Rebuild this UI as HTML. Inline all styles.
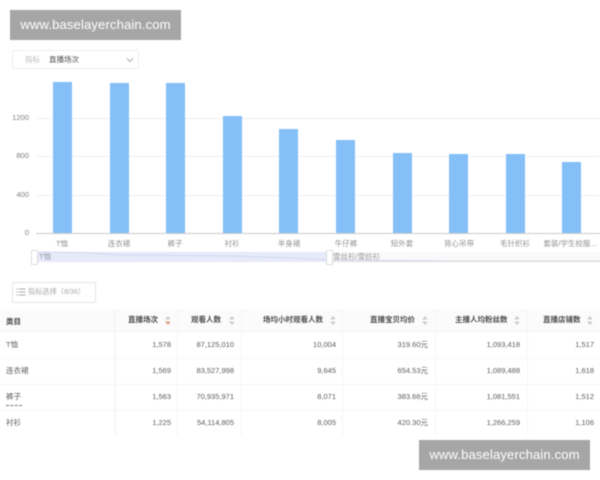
<!DOCTYPE html>
<html><head><meta charset="utf-8">
<style>
html,body{margin:0;padding:0;width:600px;height:480px;overflow:hidden;background:#fff}
#p{position:relative;width:600px;height:480px;overflow:hidden;font-family:"Liberation Sans","Noto Sans CJK SC",sans-serif;filter:blur(.45px)}
#p div,#p span.a{position:absolute}
.t{white-space:nowrap;line-height:14px}
.wm{background:#a6a6a6;color:#fff;font-size:13.1px;line-height:30px;text-align:center;letter-spacing:.12px}
.bar{background:#85bff8;width:19px;bottom:247px}
.g{background:#efefef;height:1px;left:36px;width:564px}
.yl{color:#808080;font-size:7.6px;text-align:right;width:18px;left:11px}
.xl{color:#909090;font-size:7.5px;text-align:center;width:70px;top:237px}
.h{color:#4d4d4d;font-size:7.5px;font-weight:bold;top:313px}
.c{color:#5c5c5c;font-size:7.5px;text-align:right;width:70px}
.n{color:#5c5c5c;font-size:7.5px;left:6px}
.sv{width:5px;height:9px}
.ln{background:#f6f6f6}
</style></head><body><div id="p">

<div class="wm" style="left:10px;top:10px;width:171px;height:30px">www.baselayerchain.com</div>
<div class="wm" style="left:419px;top:440px;width:171px;height:30px">www.baselayerchain.com</div>

<div style="left:12px;top:50px;width:125px;height:17px;border:1px solid #efefef;border-radius:2px"></div>
<div class="t" style="left:25px;top:53px;font-size:7.5px;color:#bbb">指标</div>
<div class="t" style="left:49px;top:53px;font-size:7.5px;color:#4d4d4d">直播场次</div>
<svg style="position:absolute;left:126px;top:57px" width="8" height="6"><path d="M1 1.500 L4 4.500 L7 1.500" fill="none" stroke="#aaa" stroke-width="1"/></svg>

<div class="g" style="top:118px"></div>
<div class="g" style="top:156px"></div>
<div class="g" style="top:195px"></div>
<div class="g" style="top:233px;background:#ccc"></div>
<div class="t yl" style="top:111px">1200</div>
<div class="t yl" style="top:149px">800</div>
<div class="t yl" style="top:188px">400</div>
<div class="t yl" style="top:226px">0</div>

<div class="bar" style="left:53px;top:82px;height:151px"></div>
<div class="bar" style="left:110px;top:83px;height:150px"></div>
<div class="bar" style="left:166px;top:83px;height:150px"></div>
<div class="bar" style="left:223px;top:116px;height:117px"></div>
<div class="bar" style="left:279px;top:129px;height:104px"></div>
<div class="bar" style="left:336px;top:140px;height:93px"></div>
<div class="bar" style="left:393px;top:153px;height:80px"></div>
<div class="bar" style="left:449px;top:154px;height:79px"></div>
<div class="bar" style="left:506px;top:154px;height:79px"></div>
<div class="bar" style="left:562px;top:162px;height:71px"></div>

<div class="t xl" style="left:27px">T恤</div>
<div class="t xl" style="left:84px">连衣裙</div>
<div class="t xl" style="left:140px">裤子</div>
<div class="t xl" style="left:197px">衬衫</div>
<div class="t xl" style="left:254px">半身裙</div>
<div class="t xl" style="left:311px">牛仔裤</div>
<div class="t xl" style="left:367px">短外套</div>
<div class="t xl" style="left:424px">背心吊带</div>
<div class="t xl" style="left:480px">毛针织衫</div>
<div class="t xl" style="left:535px;width:70px">套装/学生校服...</div>

<svg style="position:absolute;left:31px;top:251px" width="569" height="12">
<rect x="0" y="1" width="569" height="10" fill="#f9f9f9"/>
<rect x="4" y="1" width="295" height="10" fill="#e6eaf9"/>
<path d="M4 1 L50 1.500 L90 4 L200 5 L260 7 L299 9 L420 10 L569 10" fill="none" stroke="#d2d8f0" stroke-width="1"/>
<path d="M299 10.500 L569 10.500" stroke="#ddd" stroke-width="1"/>
</svg>
<div style="left:31px;top:250px;width:5px;height:13px;background:#fff;border:1px solid #ddd;border-radius:1px"></div>
<div style="left:326px;top:250px;width:5px;height:13px;background:#fff;border:1px solid #ddd;border-radius:1px"></div>
<div class="t" style="left:39px;top:250px;font-size:7.5px;color:#99a">T恤</div>
<div class="t" style="left:333px;top:250px;font-size:7.5px;color:#999">雪丝衫/雪纺衫</div>

<div style="left:12px;top:282px;width:82px;height:19px;border:1px solid #e4e4e4;border-radius:2px"></div>
<svg style="position:absolute;left:16px;top:287px" width="10" height="10"><path d="M3 2H9.500M3 5H9.500M3 8H9.500M.5 2H2M.5 5H2M.5 8H2" stroke="#aaa" stroke-width="1"/></svg>
<div class="t" style="left:28px;top:285px;font-size:7.2px;color:#aaa">指标选择（8/36）</div>

<div style="left:0;top:309px;width:600px;height:22px;background:#fbfbfb"></div>
<div class="ln" style="left:0;top:331px;width:600px;height:1px"></div>
<div class="ln" style="left:0;top:358px;width:600px;height:1px"></div>
<div class="ln" style="left:0;top:384px;width:600px;height:1px"></div>
<div class="ln" style="left:0;top:410px;width:600px;height:1px"></div>
<div class="ln" style="left:114px;top:309px;width:2px;height:126px"></div>
<div class="ln" style="left:177px;top:309px;width:1px;height:126px"></div>
<div class="ln" style="left:241px;top:309px;width:1px;height:126px"></div>
<div class="ln" style="left:342px;top:309px;width:1px;height:126px"></div>
<div class="ln" style="left:435px;top:309px;width:1px;height:126px"></div>
<div class="ln" style="left:527px;top:309px;width:1px;height:126px"></div>

<div class="t h" style="left:6px;top:315px">类目</div>
<div class="t h" style="left:128px">直播场次</div>
<div class="t h" style="left:191px">观看人数</div>
<div class="t h" style="left:263px">场均小时观看人数</div>
<div class="t h" style="left:370px">直播宝贝均价</div>
<div class="t h" style="left:455px">主播人均粉丝数</div>
<div class="t h" style="left:543px">直播店铺数</div>

<svg class="sv" style="position:absolute;left:165px;top:316px" width="6" height="9"><path d="M3 0L6 3.500H0Z" fill="#ccc"/><path d="M3 9L6 5.500H0Z" fill="#e09a80"/></svg>
<svg class="sv" style="position:absolute;left:229px;top:316px" width="6" height="9"><path d="M3 0L6 3.500H0Z" fill="#ccc"/><path d="M3 9L6 5.500H0Z" fill="#ccc"/></svg>
<svg class="sv" style="position:absolute;left:330px;top:316px" width="6" height="9"><path d="M3 0L6 3.500H0Z" fill="#ccc"/><path d="M3 9L6 5.500H0Z" fill="#ccc"/></svg>
<svg class="sv" style="position:absolute;left:422px;top:316px" width="6" height="9"><path d="M3 0L6 3.500H0Z" fill="#ccc"/><path d="M3 9L6 5.500H0Z" fill="#ccc"/></svg>
<svg class="sv" style="position:absolute;left:514px;top:316px" width="6" height="9"><path d="M3 0L6 3.500H0Z" fill="#ccc"/><path d="M3 9L6 5.500H0Z" fill="#ccc"/></svg>
<svg class="sv" style="position:absolute;left:587px;top:316px" width="6" height="9"><path d="M3 0L6 3.500H0Z" fill="#ccc"/><path d="M3 9L6 5.500H0Z" fill="#ccc"/></svg>

<div class="t n" style="top:338px">T恤</div>
<div class="t n" style="top:364px">连衣裙</div>
<div class="t n" style="top:390px">裤子</div>
<div style="left:6px;top:405px;width:16px;border-top:1px dashed #777"></div>
<div class="t n" style="top:416px">衬衫</div>

<div class="t c" style="left:101px;top:338px">1,578</div>
<div class="t c" style="left:164px;top:338px">87,125,010</div>
<div class="t c" style="left:266px;top:338px">10,004</div>
<div class="t c" style="left:358px;top:338px">319.60元</div>
<div class="t c" style="left:450px;top:338px">1,093,418</div>
<div class="t c" style="left:524px;top:338px">1,517</div>

<div class="t c" style="left:101px;top:364px">1,569</div>
<div class="t c" style="left:164px;top:364px">83,527,998</div>
<div class="t c" style="left:266px;top:364px">9,645</div>
<div class="t c" style="left:358px;top:364px">654.53元</div>
<div class="t c" style="left:450px;top:364px">1,089,488</div>
<div class="t c" style="left:524px;top:364px">1,618</div>

<div class="t c" style="left:101px;top:390px">1,563</div>
<div class="t c" style="left:164px;top:390px">70,935,971</div>
<div class="t c" style="left:266px;top:390px">8,071</div>
<div class="t c" style="left:358px;top:390px">383.66元</div>
<div class="t c" style="left:450px;top:390px">1,081,551</div>
<div class="t c" style="left:524px;top:390px">1,512</div>

<div class="t c" style="left:101px;top:416px">1,225</div>
<div class="t c" style="left:164px;top:416px">54,114,805</div>
<div class="t c" style="left:266px;top:416px">8,005</div>
<div class="t c" style="left:358px;top:416px">420.30元</div>
<div class="t c" style="left:450px;top:416px">1,266,259</div>
<div class="t c" style="left:524px;top:416px">1,106</div>

</div></body></html>
